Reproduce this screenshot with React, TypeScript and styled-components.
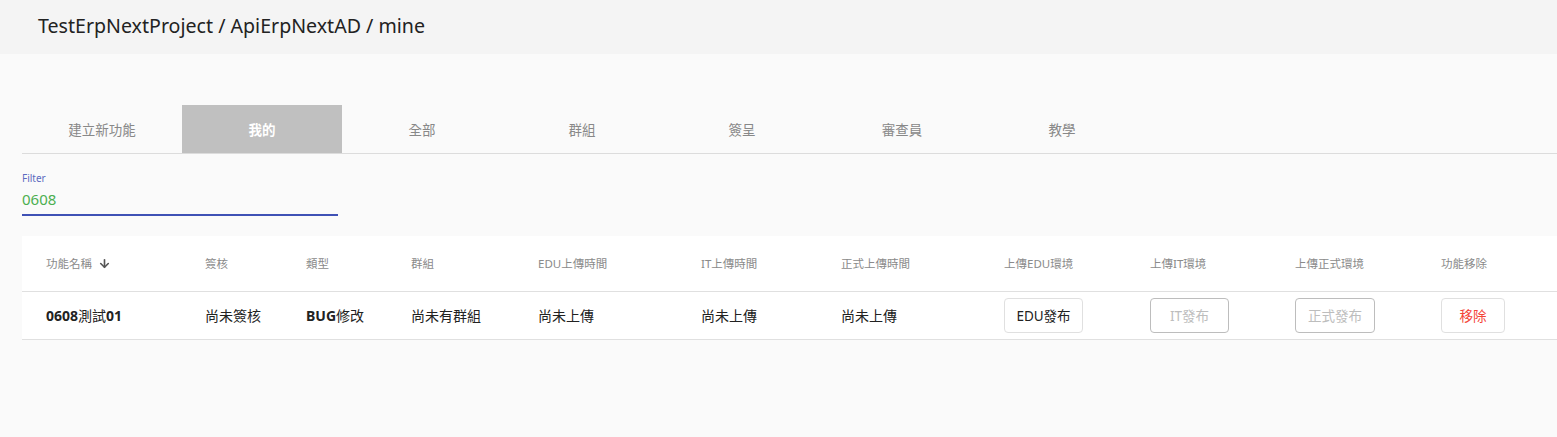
import React from "react";
import styled, { createGlobalStyle } from "styled-components";
import { ArrowDown } from "lucide-react";

const Global = createGlobalStyle`
  html, body { margin: 0; padding: 0; background: #fafafa; }
  body { font-family: "Noto Sans", "Open Sans", "Noto Sans CJK TC", sans-serif; }
  * { box-sizing: border-box; }
`;

const Page = styled.div`
  width: 1557px;
  min-height: 437px;
  background: #fafafa;
`;

const Header = styled.header`
  height: 54px;
  background: #f4f4f4;
  display: flex;
  align-items: center;
  padding: 0 0 4px 38px;
  font-size: 19.6px;
  color: #222;
  font-family: "Noto Sans", "Noto Sans CJK TC", sans-serif;
`;

const Main = styled.main`
  padding: 51px 0 0 22px;
`;

const Tabs = styled.nav`
  display: flex;
  border-bottom: 1px solid #dcdcdc;
`;

const Tab = styled.div<{ $active?: boolean }>`
  width: 160px;
  height: 48px;
  display: flex;
  align-items: center;
  justify-content: center;
  font-size: 13.5px;
  font-family: "Noto Sans CJK TC", sans-serif;
  color: ${(p) => (p.$active ? "#fff" : "#888")};
  font-weight: ${(p) => (p.$active ? 700 : 400)};
  background: ${(p) => (p.$active ? "#c0c0c0" : "transparent")};
`;

const Field = styled.div`
  width: 316px;
  margin-top: 17px;
  border-bottom: 2px solid #3f51b5;
  display: flex;
  flex-direction: column;
`;

const Label = styled.label`
  font-size: 10px;
  color: #5c6bc0;
  line-height: 14px;
`;

const Value = styled.div`
  font-size: 15px;
  color: #4caf50;
  line-height: 22px;
  padding: 3px 0 4px;
`;

const Table = styled.table`
  margin-top: 20px;
  width: 1535px;
  border-collapse: collapse;
  background: #fff;
  table-layout: fixed;
  font-family: "Noto Sans", "Noto Sans CJK TC", sans-serif;
`;

const Th = styled.th`
  height: 55px;
  padding: 0 0 0 24px;
  text-align: left;
  font-size: 11.5px;
  font-weight: 400;
  color: #8a8a8a;
  border-bottom: 1px solid #e0e0e0;
  white-space: nowrap;
`;

const Td = styled.td`
  height: 48px;
  padding: 0 0 0 24px;
  font-size: 14px;
  color: #222;
  border-bottom: 1px solid #e0e0e0;
  white-space: nowrap;
`;

const Strong = styled.span`
  font-weight: 700;
`;

const SortIcon = styled(ArrowDown)`
  vertical-align: -2px;
  margin-left: 6px;
  color: #555;
`;

const Button = styled.button<{ $variant?: "normal" | "disabled" | "danger"; $w: number }>`
  width: ${(p) => p.$w}px;
  height: 35px;
  background: #fff;
  border-radius: 4px;
  font-family: "Noto Sans", "Noto Sans CJK TC", sans-serif;
  font-size: 13.5px;
  padding: 0;
  border: 1px solid
    ${(p) => (p.$variant === "disabled" ? "#bdbdbd" : "#e0e0e0")};
  color: ${(p) =>
    p.$variant === "disabled" ? "#bdbdbd" : p.$variant === "danger" ? "#f44336" : "#222"};
`;

const cols = [159, 101, 105, 127, 163, 140, 163, 146, 145, 146, 140];

const tabs = ["建立新功能", "我的", "全部", "群組", "簽呈", "審查員", "教學"];

export default function App() {
  return (
    <Page>
      <Global />
      <Header>TestErpNextProject / ApiErpNextAD / mine</Header>
      <Main>
        <Tabs>
          {tabs.map((t, i) => (
            <Tab key={t} $active={i === 1}>
              {t}
            </Tab>
          ))}
        </Tabs>
        <Field>
          <Label>Filter</Label>
          <Value>0608</Value>
        </Field>
        <Table>
          <colgroup>
            {cols.map((w, i) => (
              <col key={i} style={{ width: w }} />
            ))}
          </colgroup>
          <thead>
            <tr>
              <Th>
                功能名稱
                <SortIcon size={13} strokeWidth={3} />
              </Th>
              <Th>簽核</Th>
              <Th>類型</Th>
              <Th>群組</Th>
              <Th>EDU上傳時間</Th>
              <Th>IT上傳時間</Th>
              <Th>正式上傳時間</Th>
              <Th>上傳EDU環境</Th>
              <Th>上傳IT環境</Th>
              <Th>上傳正式環境</Th>
              <Th>功能移除</Th>
            </tr>
          </thead>
          <tbody>
            <tr>
              <Td>
                <Strong>0608</Strong>測試<Strong>01</Strong>
              </Td>
              <Td>尚未簽核</Td>
              <Td>
                <Strong>BUG</Strong>修改
              </Td>
              <Td>尚未有群組</Td>
              <Td>尚未上傳</Td>
              <Td>尚未上傳</Td>
              <Td>尚未上傳</Td>
              <Td>
                <Button $w={79}>EDU發布</Button>
              </Td>
              <Td>
                <Button $w={79} $variant="disabled" disabled>
                  IT發布
                </Button>
              </Td>
              <Td>
                <Button $w={80} $variant="disabled" disabled>
                  正式發布
                </Button>
              </Td>
              <Td>
                <Button $w={64} $variant="danger">
                  移除
                </Button>
              </Td>
            </tr>
          </tbody>
        </Table>
      </Main>
    </Page>
  );
}
